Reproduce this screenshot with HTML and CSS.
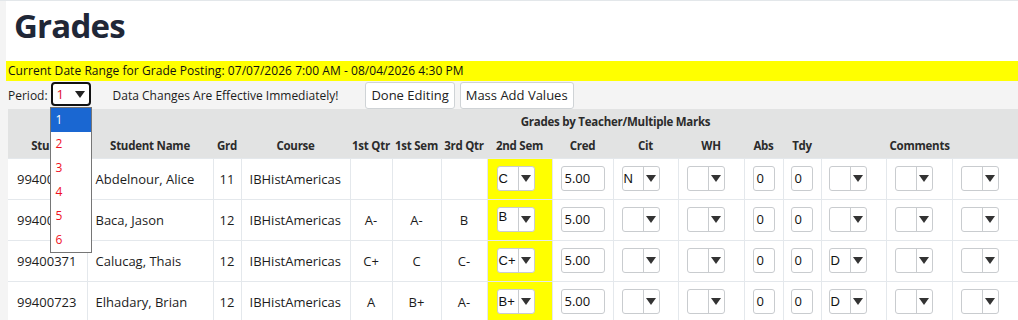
FILE: index.html
```html
<!DOCTYPE html>
<html>
<head>
<meta charset="utf-8">
<link rel="stylesheet" href="styles.css">
</head>
<body>
<div class="page">
  <header class="titlebar"><h1>Grades</h1></header>
  <div class="daterange">Current Date Range for Grade Posting: 07/07/2026 7:00 AM - 08/04/2026 4:30 PM</div>
  <div class="toolbar">
    <span class="lbl">Period:</span>
    <span class="period">
      <span class="pval">1</span><span class="parrow"></span>
      <ul class="plist">
        <li class="sel">1</li><li>2</li><li>3</li><li>4</li><li>5</li><li>6</li>
      </ul>
    </span>
    <span class="note">Data Changes Are Effective Immediately!</span>
    <button class="btn">Done Editing</button>
    <button class="btn">Mass Add Values</button>
  </div>
  <table class="grades">
    <colgroup>
      <col class="c79"><col class="c126"><col class="c28"><col class="c109"><col class="c42"><col class="c49"><col class="c46"><col class="c65"><col class="c61"><col class="c65"><col class="c66"><col class="c39"><col class="c38"><col class="c65"><col class="c66"><col class="c66">
    </colgroup>
    <thead>
      <tr class="h1">
        <th colspan="2"></th>
        <th colspan="14">Grades by Teacher/Multiple Marks</th>
      </tr>
      <tr class="h2">
        <th>Stu ID</th><th>Student Name</th><th>Grd</th><th>Course</th><th>1st Qtr</th><th>1st Sem</th><th>3rd Qtr</th><th>2nd Sem</th><th>Cred</th><th>Cit</th><th>WH</th><th>Abs</th><th>Tdy</th><th colspan="3">Comments</th>
      </tr>
    </thead>
    <tbody>
      <tr>
        <td class="l">99400518</td><td class="l">Abdelnour, Alice</td><td class="c">11</td><td class="l">IBHistAmericas</td><td class="c"></td><td class="c"></td><td class="c"></td>
        <td class="y"><span class="dd"><span class="v">C</span><span class="a"></span></span></td>
        <td><span class="inp w44">5.00</span></td>
        <td><span class="dd"><span class="v">N</span><span class="a"></span></span></td>
        <td><span class="dd"><span class="v"></span><span class="a"></span></span></td>
        <td><span class="inp w22">0</span></td><td class="t"><span class="inp w22">0</span></td>
        <td class="t"><span class="dd"><span class="v"></span><span class="a"></span></span></td>
        <td><span class="dd"><span class="v"></span><span class="a"></span></span></td>
        <td><span class="dd"><span class="v"></span><span class="a"></span></span></td>
      </tr>
      <tr>
        <td class="l">99400604</td><td class="l">Baca, Jason</td><td class="c">12</td><td class="l">IBHistAmericas</td><td class="c">A-</td><td class="c">A-</td><td class="c">B</td>
        <td class="y"><span class="dd"><span class="v top">B</span><span class="a"></span></span></td>
        <td><span class="inp w44">5.00</span></td>
        <td><span class="dd"><span class="v"></span><span class="a"></span></span></td>
        <td><span class="dd"><span class="v"></span><span class="a"></span></span></td>
        <td><span class="inp w22">0</span></td><td class="t"><span class="inp w22">0</span></td>
        <td class="t"><span class="dd"><span class="v"></span><span class="a"></span></span></td>
        <td><span class="dd"><span class="v"></span><span class="a"></span></span></td>
        <td><span class="dd"><span class="v"></span><span class="a"></span></span></td>
      </tr>
      <tr>
        <td class="l">99400371</td><td class="l">Calucag, Thais</td><td class="c">12</td><td class="l">IBHistAmericas</td><td class="c">C+</td><td class="c">C</td><td class="c">C-</td>
        <td class="y"><span class="dd"><span class="v">C+</span><span class="a"></span></span></td>
        <td><span class="inp w44">5.00</span></td>
        <td><span class="dd"><span class="v"></span><span class="a"></span></span></td>
        <td><span class="dd"><span class="v"></span><span class="a"></span></span></td>
        <td><span class="inp w22">0</span></td><td class="t"><span class="inp w22">0</span></td>
        <td class="t"><span class="dd"><span class="v">D</span><span class="a"></span></span></td>
        <td><span class="dd"><span class="v"></span><span class="a"></span></span></td>
        <td><span class="dd"><span class="v"></span><span class="a"></span></span></td>
      </tr>
      <tr>
        <td class="l">99400723</td><td class="l">Elhadary, Brian</td><td class="c">12</td><td class="l">IBHistAmericas</td><td class="c">A</td><td class="c">B+</td><td class="c">A-</td>
        <td class="y"><span class="dd"><span class="v">B+</span><span class="a"></span></span></td>
        <td><span class="inp w44">5.00</span></td>
        <td><span class="dd"><span class="v"></span><span class="a"></span></span></td>
        <td><span class="dd"><span class="v"></span><span class="a"></span></span></td>
        <td><span class="inp w22">0</span></td><td class="t"><span class="inp w22">0</span></td>
        <td class="t"><span class="dd"><span class="v">D</span><span class="a"></span></span></td>
        <td><span class="dd"><span class="v"></span><span class="a"></span></span></td>
        <td><span class="dd"><span class="v"></span><span class="a"></span></span></td>
      </tr>
    </tbody>
  </table>
</div>
</body>
</html>
```

FILE: styles.css
```css
* { box-sizing: border-box; }
html, body { margin: 0; padding: 0; }
body {
  background: #f4f4f4;
  font-family: "Open Sans", "Liberation Sans", sans-serif;
  color: #1c1c1c;
  border-top: 1px solid #e3e7ea;
}
.page { overflow: hidden; height: 319px; }
.titlebar {
  background: #fff;
  margin-left: 6px;
  height: 60px;
  padding: 3px 0 0 8px;
}
.titlebar h1 {
  margin: 0;
  font-size: 33px;
  font-weight: 700;
  color: #1f2737;
  letter-spacing: -0.8px;
  line-height: 44px;
}
.daterange {
  background: #ffff00;
  margin-left: 6px;
  height: 20px;
  line-height: 20px;
  padding-left: 2px;
  font-size: 12px;
  letter-spacing: 0.05px;
  color: #111;
}
.toolbar {
  height: 28px;
  display: flex;
  align-items: center;
  padding-left: 8px;
  font-size: 12px;
}
.lbl { margin-right: 3px; }
.period {
  position: relative;
  width: 40px;
  height: 24px;
  border: 2px solid #111;
  border-radius: 4px;
  background: #fff;
  display: flex;
  align-items: center;
  padding-left: 4px;
  margin-top: -2px;
}
.pval { color: #e0102a; font-size: 13px; flex: 1; }
.parrow {
  width: 0; height: 0;
  border-left: 5.5px solid transparent;
  border-right: 5.5px solid transparent;
  border-top: 7px solid #222;
  margin-right: 4px;
}
.plist {
  position: absolute;
  left: -3px;
  top: 23px;
  width: 42px;
  margin: 0;
  padding: 0;
  list-style: none;
  background: #fff;
  border: 1px solid #767676;
  z-index: 5;
}
.plist li {
  height: 24px;
  line-height: 24px;
  padding-left: 5px;
  color: #f0101e;
  font-size: 12px;
}
.plist li.sel { background: #1a67d2; color: #fff; }
.note { margin-left: 22px; }
.btn {
  font-family: inherit;
  font-size: 13px;
  color: #222;
  background: #fff;
  border: 1px solid #cfd3d6;
  border-radius: 3px;
  height: 27px;
  padding: 0 5px;
  margin-left: 5px;
}
.note + .btn { margin-left: 27px; }
.grades {
  margin-left: 8px;
  width: 1010px;
  table-layout: fixed;
  border-collapse: collapse;
  font-size: 13px;
}
.c79 { width: 79px; } .c126 { width: 126px; } .c28 { width: 28px; } .c109 { width: 109px; }
.c42 { width: 42px; } .c49 { width: 49px; } .c46 { width: 46px; } .c65 { width: 65px; }
.c61 { width: 61px; } .c66 { width: 66px; } .c39 { width: 39px; } .c38 { width: 38px; }
thead th {
  background: #e2e3e3;
  font-weight: 700;
  font-size: 11.5px;
  letter-spacing: -0.25px;
  color: #2b2b2b;
  padding: 0;
  white-space: nowrap;
  overflow: hidden;
}
tr.h1 th { height: 25px; }
tr.h2 th { height: 24px; }
tbody td {
  background: #fff;
  border: 1px solid #e4e8ec;
  height: 41px;
  padding: 0 0 0 8px;
  white-space: nowrap;
  overflow: hidden;
}
tbody td:first-child { border-left: none; padding-left: 9px; }
tbody td:last-child { border-right: none; }
tbody td.c { text-align: center; padding: 0; }
tbody td.t { padding-left: 7px; }
tbody td.y { background: #ffff00; padding-left: 9px; }
.dd {
  display: inline-flex;
  vertical-align: middle;
  width: 38px;
  height: 25px;
  border: 1px solid #c9cccf;
  border-radius: 3px;
  background: #fff;
}
.dd .v {
  width: 21px;
  border-right: 1px solid #c9cccf;
  font-family: "Liberation Sans", Arial, sans-serif;
  font-size: 13px;
  line-height: 23px;
  padding-left: 1px;
  color: #111;
}
.dd .v.top { line-height: 17px; }
.dd .a {
  flex: 1;
  display: flex;
  align-items: center;
  justify-content: center;
}
.dd .a::after {
  content: "";
  width: 0; height: 0;
  border-left: 5px solid transparent;
  border-right: 5px solid transparent;
  border-top: 7px solid #333;
}
.inp {
  display: inline-block;
  vertical-align: middle;
  height: 25px;
  border: 1px solid #c9cccf;
  border-radius: 3px;
  background: #fff;
  line-height: 23px;
  padding-left: 3px;
  font-size: 13px;
  color: #111;
}
.w44 { width: 44px; }
.w22 { width: 22px; padding-left: 3px; }
```
